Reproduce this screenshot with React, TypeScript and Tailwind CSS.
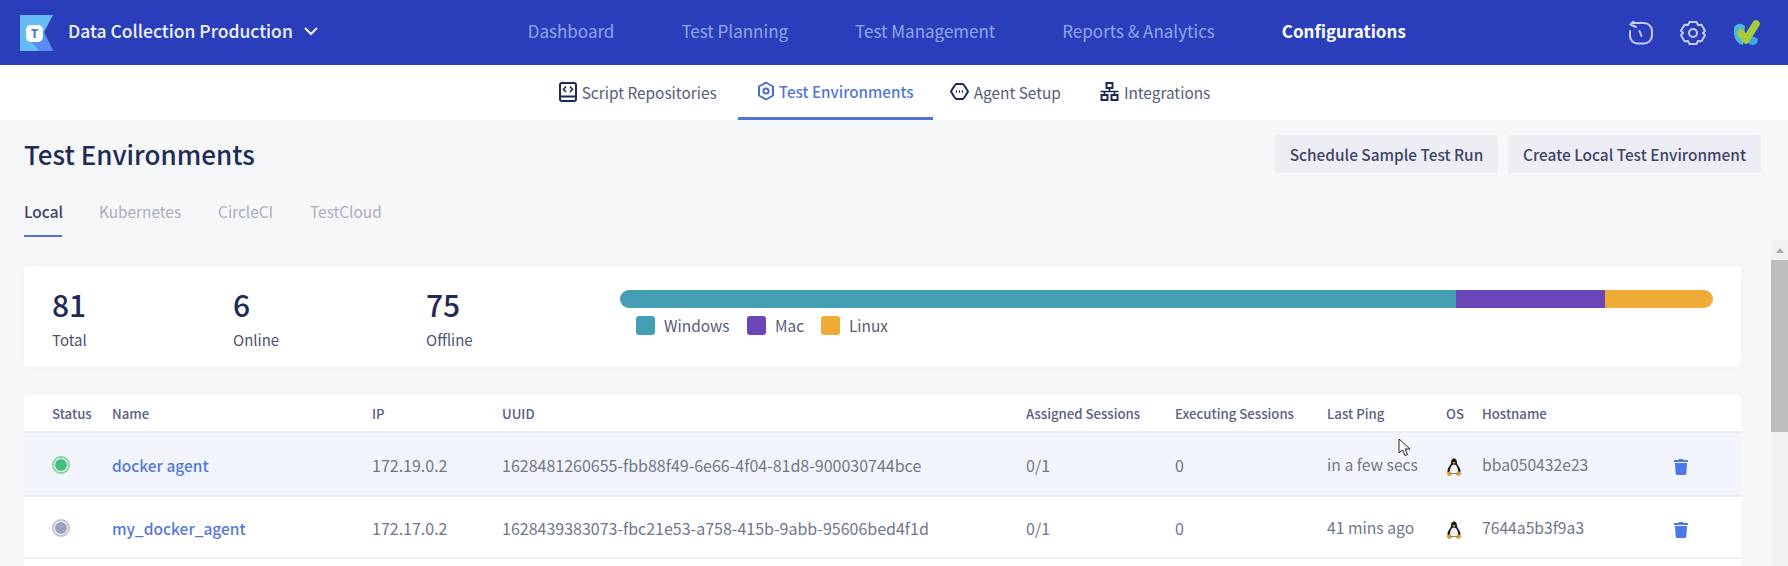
import React from "react";
import { FaTrash } from "react-icons/fa";

const font = { fontFamily: '"Noto Sans CJK SC", "Noto Sans", sans-serif' };

const Logo = () => (
  <svg width="36" height="37" viewBox="0 0 36 37" className="shrink-0">
    <polygon points="0,1 33,1 24,18 33,37 0,37" fill="#66bdf6" />
    <polygon points="9,25 24,18 33,37 19,37" fill="#5b8df0" />
    <rect x="6" y="11" width="17" height="17" rx="5" fill="#fff" />
    <text x="14.5" y="24" textAnchor="middle" fontSize="12" fontWeight="800" fill="#3f7fd9" fontFamily="Noto Sans">T</text>
  </svg>
);

const ScriptIcon = () => (
  <svg width="18" height="20" viewBox="0 0 18 20" fill="none" stroke="#1e2a55" strokeWidth="2" className="shrink-0">
    <rect x="1" y="1" width="16" height="18" rx="2" />
    <path d="M1 14.500h16" />
    <path d="M7 4.500 4.500 7.500 7 10M11 4.500l2.500 3-2.500 2.500" strokeWidth="1.600" />
  </svg>
);
const EnvIcon = () => (
  <svg width="18" height="20" viewBox="0 0 18 20" fill="none" stroke="#4a6fcb" strokeWidth="2" className="shrink-0">
    <path d="M9 1.500 16 5.500v9L9 18.500 2 14.500v-9z" strokeLinejoin="round" />
    <circle cx="9" cy="10" r="2.600" />
  </svg>
);
const AgentIcon = () => (
  <svg width="19" height="19" viewBox="0 0 19 19" fill="none" stroke="#1e2a55" strokeWidth="2" className="shrink-0">
    <path d="M6 2h7l2 2.500 3 5-3 5-2 2.500H6l-2-2.500-3-5 3-5z" strokeLinejoin="round" />
    <path d="M6 9.500h1M9 9.500h1M12 9.500h1" strokeWidth="2.400" />
  </svg>
);
const IntegrationIcon = () => (
  <svg width="19" height="19" viewBox="0 0 19 19" fill="none" stroke="#1e2a55" strokeWidth="2" className="shrink-0">
    <rect x="6.500" y="1" width="6" height="5" />
    <rect x="1.500" y="13" width="6" height="5" />
    <rect x="11.500" y="13" width="6" height="5" />
    <path d="M0.500 9.500h18M9.500 6v3.500M4.500 9.500V13M14.500 9.500V13" strokeWidth="1.700" />
  </svg>
);
const HistoryIcon = () => (
  <svg width="24" height="24" viewBox="0 0 24 24" fill="none" stroke="#c3cdf3" strokeWidth="2" strokeLinecap="round" strokeLinejoin="round">
    <path d="M1 10v5a7.500 7.500 0 0 0 7.500 7.500H15a8 8 0 0 0 8-8V10a8 8 0 0 0-8-8H3" />
    <path d="M4.500 0.500 1.500 3.500 7 6" />
    <path d="M10.500 10l2 5" />
  </svg>
);
const GearIcon = () => (
  <svg width="28" height="28" viewBox="0 0 28 28" fill="none" stroke="#c3cdf3" strokeWidth="2" strokeLinejoin="round">
    <path d="M10.500 3h7l1.500 3 3.500-.2 3.500 6-2 2.200 2 2.200-3.500 6-3.500-.2-1.500 3h-7l-1.500-3-3.500.2-3.500-6 2-2.200-2-2.200 3.500-6 3.500.2z" />
    <circle cx="14" cy="14" r="4" />
  </svg>
);
const Avatar = () => (
  <svg width="28" height="28" viewBox="0 0 28 28">
    <path d="M15 15 L25 20 Q25 26 19 26 Q15 25 13 22z" fill="#3fa6e0" />
    <path d="M1 8 Q6 2 12 7 L10 26 Q2 24 1 15z" fill="#4db6d8" />
    <path d="M8 14 L13 21 L23 5" fill="none" stroke="#a5cc3a" strokeWidth="7.500" strokeLinecap="round" strokeLinejoin="round" />
  </svg>
);
const Penguin = () => (
  <svg width="16" height="18" viewBox="0 0 16 18">
    <path d="M8 0.500C5.500 0.500 5 3 5 5 5 7 1.500 9.500 1.500 13c0 2 2 3 6.500 3s6.500-1 6.500-3c0-3.500-3.500-6-3.500-8 0-2-.5-4.500-3-4.500z" fill="#1c1c1c" />
    <path d="M8 6.500c-2.500 0-4 3.500-4 6.500 0 2 1.500 2.500 4 2.500s4-.5 4-2.500c0-3-1.500-6.500-4-6.500z" fill="#f3f3f3" />
    <path d="M6.500 4.500 8 3.800l1.500.7L8 6z" fill="#e5a93a" />
    <path d="M0.500 15 4 13l2 4-3.500 1zM15.500 15 12 13l-2 4 3.500 1z" fill="#d99a2e" />
  </svg>
);

const top = ["Dashboard", "Test Planning", "Test Management", "Reports & Analytics"];
const cols = "grid grid-cols-[60px_260px_130px_524px_149px_152px_119px_36px_191px_1fr] pl-[28px] items-center";

const rows = [
  { dot: "bg-[#46bd80]", ring: "border-[#7fd5a8]", name: "docker agent", ip: "172.19.0.2", uuid: "1628481260655-fbb88f49-6e66-4f04-81d8-900030744bce", ping: "in a few secs", host: "bba050432e23", bg: "bg-[#f1f5fb]", h: "h-[64px]" },
  { dot: "bg-[#98a0bb]", ring: "border-[#bcc2d4]", name: "my_docker_agent", ip: "172.17.0.2", uuid: "1628439383073-fbc21e53-a758-415b-9abb-95606bed4f1d", ping: "41 mins ago", host: "7644a5b3f9a3", bg: "bg-white", h: "h-[62px]" },
];

export default function App() {
  return (
    <div style={font} className="w-[1788px] h-[566px] overflow-hidden flex flex-col bg-[#f5f7f9] relative">
      <header className="h-[65px] shrink-0 bg-[#2a3ebb] flex items-center pl-[20px] pr-[27px]">
        <Logo />
        <span className="ml-[12px] mb-[4px] text-[17.500px] font-medium text-[#eef0fb] whitespace-nowrap leading-[24px]">Data Collection Production</span>
        <svg width="14" height="9" viewBox="0 0 14 9" fill="none" stroke="#eef0fb" strokeWidth="2" className="ml-[11px] mb-[2px]"><path d="M1 1l6 6 6-6" /></svg>
        <nav className="ml-[210px] mb-[4px] flex items-center gap-[67px] text-[17px] leading-[24px] whitespace-nowrap">
          {top.map((t) => <span key={t} className="text-[#93a6ea]">{t}</span>)}
          <span className="font-bold text-white">Configurations</span>
        </nav>
        <div className="ml-auto flex items-center gap-[26px]">
          <HistoryIcon />
          <GearIcon />
          <Avatar />
        </div>
      </header>

      <nav className="h-[55px] shrink-0 bg-white flex justify-center pr-[19px] text-[15.400px] leading-[22px] text-[#565c78] whitespace-nowrap">
        <div className="flex items-center gap-[5px] mr-[21px] pb-[2px]"><ScriptIcon /><span>Script Repositories</span></div>
        <div className="flex items-center gap-[4px] w-[195px] justify-center border-b-[3px] border-[#4f74d8] text-[#5577d2] font-medium mr-[17px] text-[15.200px] pb-[1px]"><EnvIcon /><span>Test Environments</span></div>
        <div className="flex items-center gap-[5px] mr-[39px] pb-[2px]"><AgentIcon /><span>Agent Setup</span></div>
        <div className="flex items-center gap-[5px] pb-[2px]"><IntegrationIcon /><span>Integrations</span></div>
      </nav>

      <main className="flex-1 min-h-0 flex flex-col">
        <div className="flex items-center justify-between pl-[24px] pr-[27px] pt-[15px] h-[53px]">
          <h1 className="text-[26px] leading-[36px] font-medium text-[#202c55]">Test Environments</h1>
          <div className="flex gap-[10px] text-[15.400px] leading-[22px] font-medium text-[#3c4468] whitespace-nowrap">
            <button className="h-[38px] w-[223px] bg-[#eceef4] rounded-[3px]">Schedule Sample Test Run</button>
            <button className="h-[38px] w-[253px] bg-[#eceef4] rounded-[3px]">Create Local Test Environment</button>
          </div>
        </div>

        <div className="pl-[24px] flex gap-[37px] text-[15.400px] leading-[24px] text-[#a9aec2] h-[64px] pt-[26px]">
          <div className="h-[38px] border-b-[2px] border-[#4f74d8] font-medium text-[#3c4468] w-[38px]">Local</div>
          <span>Kubernetes</span>
          <span>CircleCI</span>
          <span>TestCloud</span>
        </div>

        <div className="flex-1 min-h-0 flex">
          <div className="flex-1 min-w-0 pl-[24px] pr-[30px] pt-[29px]">
            <section className="h-[101px] bg-white rounded-[4px] flex pl-[28px] pr-[28px] shadow-[0_0_12px_rgba(40,50,90,0.03)]">
              <div className="w-[181px] pt-[18px]">
                <div className="text-[30px] leading-[40px] font-medium text-[#202c55]">81</div>
                <div className="mt-[6px] text-[15px] leading-[20px] text-[#4c5270]">Total</div>
              </div>
              <div className="w-[193px] pt-[18px]">
                <div className="text-[30px] leading-[40px] font-medium text-[#202c55]">6</div>
                <div className="mt-[6px] text-[15px] leading-[20px] text-[#4c5270]">Online</div>
              </div>
              <div className="w-[194px] pt-[18px]">
                <div className="text-[30px] leading-[40px] font-medium text-[#202c55]">75</div>
                <div className="mt-[6px] text-[15px] leading-[20px] text-[#4c5270]">Offline</div>
              </div>
              <div className="flex-1 pt-[24px]">
                <div className="h-[18px] rounded-full overflow-hidden flex w-[1093px]">
                  <div className="w-[836px] bg-[#459fb4]" />
                  <div className="w-[149px] bg-[#6a46b8]" />
                  <div className="flex-1 bg-[#eeac36]" />
                </div>
                <div className="mt-[7px] ml-[16px] flex items-center text-[15.400px] leading-[20px] text-[#565c78] h-[20px]">
                  <span className="w-[19px] h-[19px] rounded-[3px] bg-[#459fb4]" />
                  <span className="ml-[9px] w-[83px]">Windows</span>
                  <span className="w-[19px] h-[19px] rounded-[3px] bg-[#6a46b8]" />
                  <span className="ml-[9px] w-[46px]">Mac</span>
                  <span className="w-[19px] h-[19px] rounded-[3px] bg-[#eeac36]" />
                  <span className="ml-[9px]">Linux</span>
                </div>
              </div>
            </section>

            <section className="mt-[28px] bg-white rounded-[4px]">
              <div className={`${cols} h-[38px] pt-[1px] border-b-[2px] border-[#eceef3] text-[13.200px] leading-[18px] font-medium text-[#5a6080] whitespace-nowrap`}>
                <span>Status</span><span>Name</span><span>IP</span><span>UUID</span><span>Assigned Sessions</span><span>Executing Sessions</span><span>Last Ping</span><span>OS</span><span>Hostname</span><span />
              </div>
              {rows.map((r) => (
                <div key={r.name} className={`${cols} ${r.h} ${r.bg} pt-[1px] border-b-[2px] border-[#eceef3] text-[16px] leading-[20px] text-[#71768a] whitespace-nowrap`}>
                  <span className={`w-[18px] h-[18px] rounded-full border-[2px] ${r.ring} bg-white flex items-center justify-center`}>
                    <span className={`w-[12px] h-[12px] rounded-full ${r.dot}`} />
                  </span>
                  <span className="font-medium text-[15.500px] text-[#5578d6]">{r.name}</span>
                  <span>{r.ip}</span>
                  <span>{r.uuid}</span>
                  <span>0/1</span>
                  <span>0</span>
                  <span className="text-[15.700px]">{r.ping}</span>
                  <span className="pt-[5px]"><Penguin /></span>
                  <span className="text-[15.700px]">{r.host}</span>
                  <span className="pt-[5px]"><FaTrash className="text-[#4a78e6] text-[16px]" /></span>
                </div>
              ))}
              <div className="h-[20px] bg-white" />
            </section>
          </div>

          <aside className="w-[17px] shrink-0 mt-[3px] bg-[#f1f1f1] flex flex-col items-center">
            <div className="h-[20px] flex items-center justify-center">
              <span className="w-0 h-0 border-x-[4px] border-x-transparent border-b-[5px] border-b-[#a8a8a8]" />
            </div>
            <div className="w-full h-[172px] bg-[#bdbdbd]" />
          </aside>
        </div>
      </main>

      <svg width="13" height="19" viewBox="0 0 13 19" className="absolute left-[1398px] top-[438px]">
        <path d="M1 1v14l3.500-3 2.500 5.500 2.500-1L7 11h5z" fill="#fff" stroke="#222" strokeWidth="1" />
      </svg>
    </div>
  );
}
